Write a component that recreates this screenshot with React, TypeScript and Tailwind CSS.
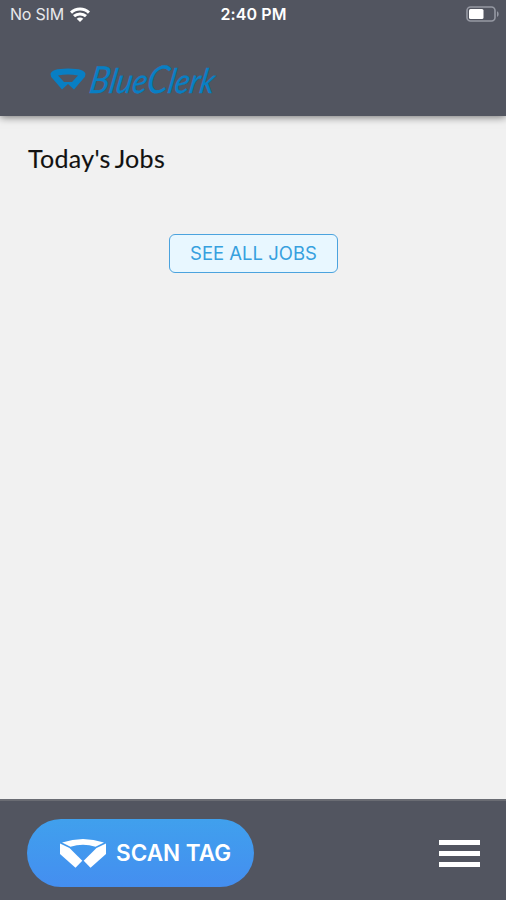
function WifiIcon() {
  return (
    <svg width="20" height="15" viewBox="0 0 20 15" fill="none" stroke="#fff" strokeWidth="3.1">
      <path d="M1 5.6C6 .8 14 .8 19 5.6" />
      <path d="M4 9.2C7.4 6.2 12.6 6.2 16 9.2" />
      <path d="M6.7 11.8C8.6 10.1 11.4 10.1 13.3 11.8L10 15Z" fill="#fff" stroke="none" />
    </svg>
  );
}

function BatteryIcon() {
  return (
    <svg width="34" height="16" viewBox="0 0 34 16">
      <rect x="1" y="1" width="28" height="14" rx="3.5" fill="none" stroke="#9699a3" strokeWidth="1.6" />
      <rect x="3" y="3" width="14.5" height="10" rx="1.5" fill="#fff" />
      <path d="M31 5.2c2.2.6 2.2 5 0 5.6z" fill="#9699a3" />
    </svg>
  );
}

function StatusBar() {
  return (
    <div className="grid h-7 grid-cols-3 items-center pl-[10px] pr-[6px] text-white">
      <div className="flex items-center gap-[6px]">
        <span className="text-[16px] tracking-[-0.2px] text-[#e8e9ec]">No SIM</span>
        <WifiIcon />
      </div>
      <span className="-ml-[3px] text-center text-[16px] font-semibold tracking-[0.1px]">2:40 PM</span>
      <div className="flex justify-end">
        <BatteryIcon />
      </div>
    </div>
  );
}

function Logo() {
  return (
    <svg width="190" height="50" viewBox="0 -6 190 50" fill="#087fc4">
      <path
        fillRule="evenodd"
        d="M.5 15Q1 12.500 5 11Q9 9.500 18 9.500Q27 9.500 31 11Q35 12.500 35.500 15Q35.500 18 33 20L24 30.500L18 25L12 30.500L3 20Q.5 18 .5 15ZM8 16.500L14 23H22L28 16.500Q18 14.500 8 16.500Z"
      />
      <text
        transform="translate(38 34) skewX(-10)"
        className="font-['Lato',sans-serif] italic"
        stroke="#087fc4"
        strokeWidth="0.3"
        textLength="125"
        lengthAdjust="spacingAndGlyphs"
      >
        <tspan fontSize="37">B</tspan>
        <tspan fontSize="34">lue</tspan>
        <tspan fontSize="38">C</tspan>
        <tspan fontSize="34">lerk</tspan>
      </text>
    </svg>
  );
}

function CollarIcon() {
  return (
    <svg width="46" height="29" viewBox="0 0 46 29" fill="#fff">
      <path d="M2 3.5Q23-3.5 44 3.5L35.5 7.8Q23 3.5 10.5 7.8Z" />
      <path d="M0 4.5L9.5 9L22.3 21.8L15.5 28.8L0 15Z" />
      <path d="M46 4.5L36.5 9L23.7 21.8L30.5 28.8L46 15Z" />
    </svg>
  );
}

export default function App() {
  return (
    <div className="flex h-[900px] w-[506px] flex-col overflow-hidden bg-[#f1f1f1] font-['Inter',sans-serif]">
      <header className="h-[116px] shrink-0 bg-[#525560] shadow-[0_1px_8px_rgba(0,0,0,0.55)]">
        <StatusBar />
        <div className="pl-[50px] pt-[25px]">
          <Logo />
        </div>
      </header>

      <main className="flex flex-1 flex-col pt-[28px]">
        <h1 className="pl-7 font-['Lato',sans-serif] text-[25px] leading-7 tracking-[0.3px] text-[#111] [word-spacing:-2px] [-webkit-text-stroke:0.15px_#111]">
          Today's Jobs
        </h1>
        <button className="mt-[62px] h-[39px] w-[169px] self-center rounded-[6px] border border-[#4ba3de] bg-[#e8f7ff] pl-px pt-px text-[18.5px] text-[#36a0de]">
          SEE ALL JOBS
        </button>
      </main>

      <footer className="flex h-[101px] shrink-0 items-center justify-between border-t-2 border-[#6a6c73] bg-[#525560] pl-[27px] pr-[26px] pt-[5px]">
        <button className="flex h-[68px] w-[227px] items-center gap-[10px] rounded-full bg-gradient-to-b from-[#40a0ed] to-[#448ef0] pl-[33px] text-[22.5px] font-semibold text-white">
          <CollarIcon />
          <span className="whitespace-nowrap">SCAN TAG</span>
        </button>
        <button className="flex w-[41px] flex-col gap-[6px]">
          <span className="h-[5px] bg-white" />
          <span className="h-[5px] bg-white" />
          <span className="h-[5px] bg-white" />
        </button>
      </footer>
    </div>
  );
}
